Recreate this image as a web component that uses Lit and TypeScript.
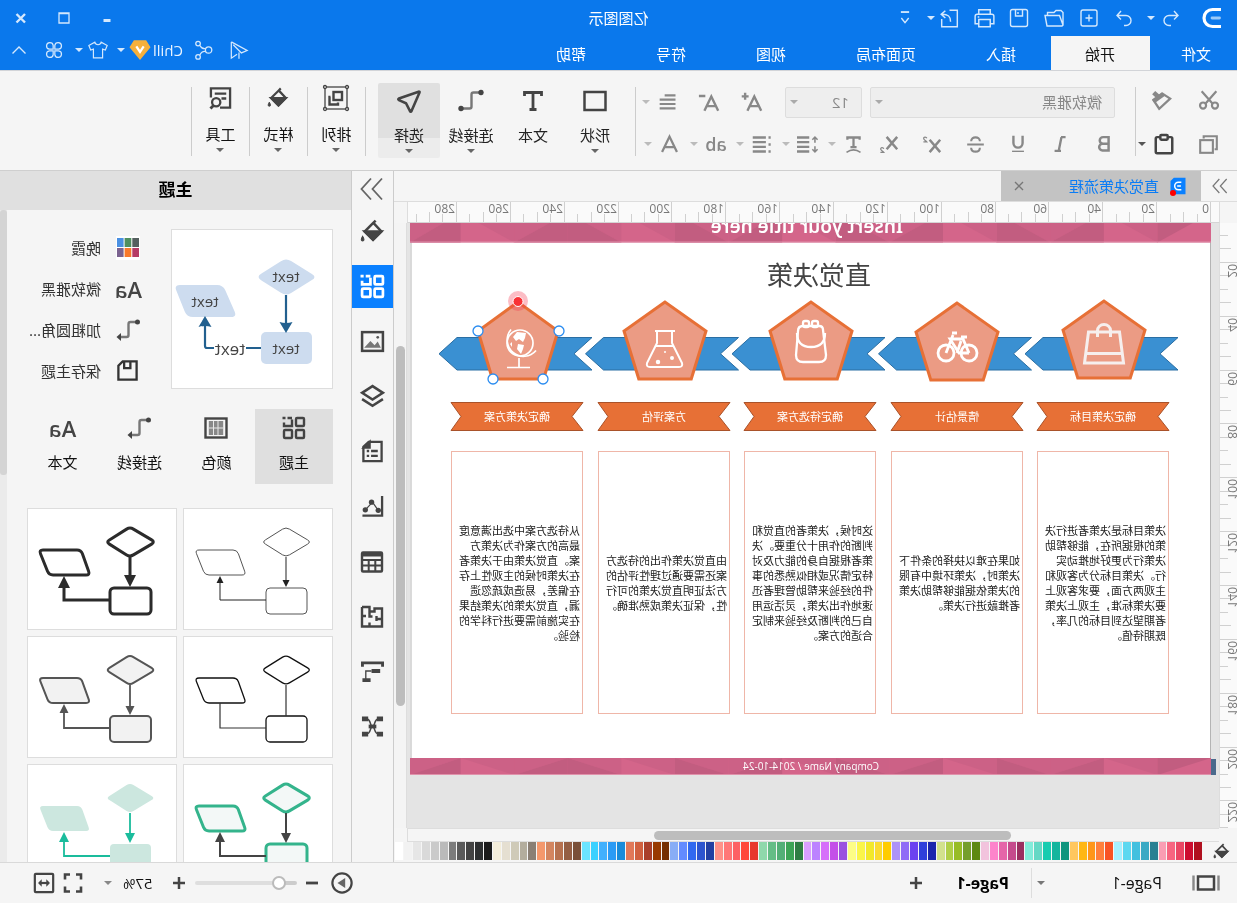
import { LitElement, html, svg, css } from "lit";
import { customElement, property } from "lit/decorators.js";

type Pt = [number, number];

/** Closed polygon path with softly rounded corners. */
function roundPoly(pts: Pt[], r: number): string {
  let d = "";
  pts.forEach((p, i) => {
    const a = pts[(i + pts.length - 1) % pts.length];
    const b = pts[(i + 1) % pts.length];
    const la = Math.hypot(a[0] - p[0], a[1] - p[1]);
    const lb = Math.hypot(b[0] - p[0], b[1] - p[1]);
    const s = [p[0] + ((a[0] - p[0]) * r) / la, p[1] + ((a[1] - p[1]) * r) / la];
    const e = [p[0] + ((b[0] - p[0]) * r) / lb, p[1] + ((b[1] - p[1]) * r) / lb];
    d += `${i ? "L" : "M"}${s[0].toFixed(1)} ${s[1].toFixed(1)}Q${p[0]} ${p[1]} ${e[0].toFixed(1)} ${e[1].toFixed(1)}`;
  });
  return d + "Z";
}

/* All glyphs live on a 24 x 24 grid. */
const ICONS: Record<string, unknown> = {
  logo: svg`<path d="M3 3.500h8.500a8.500 8.500 0 0 1 0 17H3" fill="none" stroke="#fff" stroke-width="3.200"/><path d="M4.500 12h7.500" stroke="#9ccaf8" stroke-width="2.800" stroke-linecap="round"/>`,
  undo: svg`<path d="M9 5L5 9.500l4 4M5.500 9.500H14a5 5 0 0 1 0 10h-2"/>`,
  redo: svg`<path d="M15 5l4 4.500-4 4M18.500 9.500H10a5 5 0 0 0 0 10h2"/>`,
  add: svg`<rect x="4" y="4" width="16" height="16" rx="2"/><path d="M12 8.500v7M8.500 12h7"/>`,
  open: svg`<path d="M3 19V6.500l2-2h5l2 2h6.500v3M3 19l3.500-9.500H21L19 20H4z"/>`,
  save: svg`<rect x="3.500" y="3.500" width="17" height="17" rx="2"/><path d="M8.500 4v6h7V4M13 6v2"/>`,
  print: svg`<path d="M6.500 8V3.500h11V8M6.500 17H3V10q0-2 2-2h14q2 0 2 2v7h-3.500M6.500 13h11v7h-11zM17 10.500h1.500"/>`,
  exportDoc: svg`<path d="M12 4H4.500v16h15v-7.500M11 15c0-5 2-7 8-7M16 4.500L20 8l-4 3.500"/>`,
  more: svg`<path d="M7.500 5.500h9" stroke-width="2"/><path d="M8 12l4 5 4-5"/>`,
  min: svg`<path d="M8.500 14.500h7" stroke-width="3"/>`,
  max: svg`<path d="M7 7h10v10H7zM7 7.500h10"/>`,
  close: svg`<path d="M8 8l8.500 8.500M16.500 8L8 16.500" stroke-width="2.400"/>`,
  send: svg`<path d="M19.500 3L3 12l6 2.500L17.500 6M19.500 3v17l-6-4M11.500 14v6.500"/>`,
  share: svg`<circle cx="7" cy="12" r="3.500"/><circle cx="18.500" cy="5" r="2.500"/><circle cx="18.500" cy="19.500" r="2.500"/><path d="M10.500 10.500q4 .5 6-3.500M10.500 13.500q4-.5 6 4"/>`,
  shirt: svg`<path d="M8.500 3.500a3.600 3.600 0 0 0 7 0l6.500 3.500-2 5-3-1v9.500H7V11l-3 1-2-5z"/>`,
  clover: svg`<path d="M11 11H6.500A4 4 0 1 1 11 6.500zM13 11V6.500a4 4 0 1 1 4.500 4.500zM11 13v4.500A4 4 0 1 1 6.500 13zM13 13h4.500a4 4 0 1 1-4.500 4.500z"/>`,
  up: svg`<path d="M5.500 15.500L12 9l6.500 6.500"/>`,
  badge: svg`<path d="M6 2.500h12l4 6.500L12 21 2 9z" fill="#f5b03c" stroke="#f5b03c"/><path d="M8 8l4 6 4-6" stroke="#fff" stroke-width="2.500"/>`,

  cut: svg`<path d="M4 2.500L16 16M20 2.500L8 16"/><circle cx="5.500" cy="18" r="3.300"/><circle cx="18.500" cy="18" r="3.300"/>`,
  copy: svg`<path d="M17.500 5V2.500h-15v15H5"/><rect x="7" y="7" width="14.500" height="14.500"/>`,
  brush: svg`<path d="M2 10.500L14 21.500 20 12.500 10.500 5z"/><path d="M9.500 5.500l11 8M15 8.500l5-4.500" stroke-width="5"/>`,
  paste: svg`<rect x="3" y="4.500" width="18" height="17.500" rx="1.500" stroke="#444"/><rect x="8" y="2.300" width="8" height="5" rx="1" stroke="#444" fill="#f5f5f5"/>`,
  bold: svg`<path d="M7 4.500h6a3.500 3.500 0 0 1 0 7.300H7zM7 11.800h6.700a3.600 3.600 0 0 1 0 7.200H7z"/>`,
  italic: svg`<path d="M7 4.500h5M11.500 4.500l3 15M12 19.500h7"/>`,
  underline: svg`<path d="M7 3v8a5 5 0 0 0 10 0V3"/><path d="M5.500 20h13" stroke-width="1.500"/>`,
  strike: svg`<path d="M17.500 8c0-3.500-2.500-5-5.500-5S6.500 4.500 6.500 8M6.500 16c0 3.500 2.500 5 5.500 5s5.500-1.500 5.500-5M1.500 12h21" />`,
  sup: svg`<path d="M4 7l11 13M15 7L4 20"/><path d="M18 5.500c.5-1.800 3.500-1.500 3.200.3-.2 1.300-2 2-3.200 3.500h3.500" stroke-width="1.300"/>`,
  sub: svg`<path d="M4 4l11 13M15 4L4 17"/><path d="M18 16.500c.5-1.800 3.500-1.500 3.200.3-.2 1.300-2 2-3.200 3.500h3.500" stroke-width="1.300"/>`,
  textBox: svg`<path d="M5 6.500V4h14v2.500M12 4v11M8.500 15h7"/><path d="M4 21q8-5.500 16 0" stroke-width="1.900"/>`,
  lineHeight: svg`<path d="M10 4h14M10 9.300h14M10 14.600h14M10 20h14"/><path d="M3.500 3.500v6.500M.5 6.500l3-3 3 3M3.500 14v6.500M.5 17.500l3 3 3-3" stroke-width="1.800"/>`,
  bullets: svg`<path d="M7 4h15M7 9.300h15M7 14.600h15M7 20h15M1.500 4h2.500M1.500 12h2.500M1.500 20h2.500"/>`,
  align: svg`<path d="M3 4h13M3 9.200h19M3 14.400h19M3 19.600h19"/>`,
  fontA: svg`<path d="M3.500 20.500L12 3l8.500 17.500M7 15h10"/>`,
  bigger: svg`<path d="M2 21.500L9.500 6 17 21.500M5 16.500h9"/><path d="M19.500 2v7.500M15.700 5.800h7.500"/>`,
  smaller: svg`<path d="M2 21.500L9.500 6 17 21.500M5 16.500h9M16 5.500h7"/>`,

  shape: svg`<rect x="1.500" y="3" width="21" height="18" stroke-width="2.500"/>`,
  text: svg`<path d="M3.500 7V3.500h17V7M12 3.500v17M8.500 20.500h7" stroke-width="2.800"/>`,
  connector: svg`<path d="M4 3.500h5.500q2 0 2 2v12q0 2 2 2H21" stroke="#777"/><circle cx="2" cy="3.500" r="2.700" fill="#444" stroke="none"/><circle cx="22" cy="19.500" r="2.700" fill="#444" stroke="none"/>`,
  connArrow: svg`<path d="M4 4h5.500q2 0 2 2v11q0 2 2 2H19" stroke="#777"/><circle cx="2.500" cy="4" r="2.500" fill="#444" stroke="none"/><path d="M19 15v8l4.500-4z" fill="#444" stroke="none"/>`,
  select: svg`<path d="M1.500 3.500Q1 2.500 2.500 2.700L22 9.500q1.500.8 0 1.700l-7 3-4 8q-.8 1.200-1.600-.4z" stroke-width="2.600"/>`,
  arrange: svg`<rect x="1" y="1" width="22" height="22" stroke-width="1.300"/><rect x="6" y="6" width="8.500" height="8"/><path d="M17.500 11h1v7.500h-8.500v-2" /><g fill="#f5f5f5" stroke-width="1.300"><circle cx="1" cy="1" r="1.500"/><circle cx="23" cy="1" r="1.500"/><circle cx="1" cy="23" r="1.500"/><circle cx="23" cy="23" r="1.500"/></g>`,
  bucket: svg`<path d="M10.500 4.500L3.500 12l8 8 8-8-8-8L9 1.500"/><path d="M3.500 12h16l-8 8z" fill="currentColor"/><path d="M21.500 16.500c1.600 2.500 1.800 4.500 0 4.500s-1.600-2 0-4.500z" fill="currentColor" stroke-width="1"/>`,
  tools: svg`<path d="M12.500 21.500H2v-20h20V11M6 7h12M6 12h5" /><circle cx="16.500" cy="16" r="4.300"/><path d="M19 19l3.500 3.500" stroke-width="3"/>`,

  chevrons: svg`<path d="M2 1.500L11.500 12 2 22.500M13 1.500L22.500 12 13 22.500" stroke-width="1.800"/>`,
  grid: svg`<rect x="2" y="2" width="8" height="8" rx="1"/><path d="M14 3.500V10h8V6.500M14 2h4.500M20.500 2h3" /><rect x="2" y="14" width="8" height="8" rx="1"/><rect x="14" y="14" width="8" height="8" rx="1"/>`,
  picture: svg`<rect x="2" y="3" width="20" height="18"/><path d="M20 18l-6-6.500-4 4-3-3.500L4 18z" fill="#777" stroke="none"/><circle cx="7" cy="8" r="1.300" fill="#555" stroke="none"/>`,
  layers: svg`<path d="M12 2l10 6.500L12 15 2 8.500zM2 14.500l10 6.500 10-6.500"/>`,
  page: svg`<path d="M2.500 2h13.500l5.500 5v15h-19zM6.500 11.500h7M15.500 11.500h2.500M6.500 16.500h7M15.500 16.500h2.500" /><path d="M15 2v6h6z" fill="currentColor"/>`,
  chart: svg`<path d="M2 1v20.500h20.500"/><path d="M6 16l6-8.500 7 7.500" stroke-width="1.300"/><g fill="currentColor" stroke="none"><circle cx="6" cy="16" r="2.800"/><circle cx="13" cy="7.500" r="2.800"/><circle cx="19.500" cy="15.500" r="2.800"/></g>`,
  table: svg`<rect x="2" y="2.500" width="20" height="19" rx="1"/><path d="M2 4.500h20" stroke-width="4"/><path d="M2 10h20M2 15.500h20M8.700 9v12M15.300 9v12" stroke-width="2"/>`,
  plan: svg`<path d="M2 2h7.500v8M9.500 6.500h5V3.500H22v18H9.500v-4M2 2v19.500h8M2 11h4M9.500 6.500v5h3M22 14h-6M16.500 11v5" transform="matrix(-1 0 0 1 24 0)"/>`,
  gantt: svg`<path d="M1.500 7V3h21v4" stroke-width="3"/><path d="M4 11.500h9M14 21h8.500" stroke-width="4"/><path d="M13 11.500h6V20" stroke-width="1.400"/>`,
  mind: svg`<path d="M5 4c6 0 4 8 7 8s1-8 7-8M5 20c6 0 4-8 7-8s1 8 7 8" stroke-width="1.600"/><path d="M1 4h6.500M16.500 4H23M1 20h6.500M16.500 20H23" stroke-width="5"/><path d="M8 12h8" stroke-width="4"/>`,
  palette: svg`<rect x="1.500" y="2.500" width="21" height="19"/><path d="M6 6.200h12v11.600H6z" stroke="#888" fill="#888"/><path d="M10 5v14M14.500 5v14M5 12h14" stroke="#e8e8e8" stroke-width="1"/>`,
  saveTheme: svg`<path d="M2.500 2.500H17l4.500 4.500v14.500h-19zM9 3v6.500h6.500V3"/>`,
  swatches: svg`<rect x="0" y="0" width="24" height="24" fill="#fff" stroke="none"/><g stroke="none"><path d="M1 2h6.700v9H1z" fill="#55605f"/><path d="M8.700 2h6.700v9H8.700z" fill="#4f8f5f"/><path d="M16.400 2H23v9h-6.600z" fill="#4a90e2"/><path d="M1 12h6.700v9H1z" fill="#b63c66"/><path d="M8.700 12h6.700v9H8.700z" fill="#f97a2c"/><path d="M16.400 12H23v9h-6.600z" fill="#7b6390"/></g>`,
  doc: svg`<path d="M3 2h14l4 4v16H3z" fill="#0a80ff" stroke="none"/><path d="M8 7.500h3.500a4.500 4.500 0 0 1 0 9H8M8.500 12h4.500" stroke="#fff" stroke-width="1.800"/>`,
  cross: svg`<path d="M6 6l12 12M18 6L6 18" stroke-width="2"/>`,

  pages: svg`<rect x="4" y="5.500" width="16" height="13" stroke-width="2.500"/><path d="M-.5 4.500v15M24.500 4.500v15" stroke="#888"/>`,
  plus: svg`<path d="M12 6v12M6 12h12" stroke-width="2.500"/>`,
  minus: svg`<path d="M6 12h12" stroke-width="2.800"/>`,
  play: svg`<circle cx="12" cy="12" r="10.500"/><path d="M8.500 6.500v11l8.500-5.500z" fill="#666" stroke="none"/>`,
  full: svg`<path d="M4 8.500V3.500h5M15 3.500h5v5M4 15.500v5h5M15 20.500h5v-5" stroke-width="2.600"/>`,
  fit: svg`<rect x="2" y="2" width="20" height="20" rx="1"/><path d="M6.500 12h11"/><path d="M9.500 8v8l-4-4zM14.500 8v8l4-4z" fill="currentColor" stroke="none"/>`,
};

@customElement("ed-icon")
export class EdIcon extends LitElement {
  @property() name = "";
  @property({ type: Number }) size = 24;
  @property({ type: Number }) weight = 2.4;
  static styles = css`
    :host { display: inline-flex; flex: none; }
    svg { display: block; overflow: visible; }
  `;
  render() {
    return html`<svg width=${this.size} height=${this.size} viewBox="0 0 24 24" fill="none"
      stroke="currentColor" stroke-width=${this.weight} aria-hidden="true">${ICONS[this.name]}</svg>`;
  }
}

interface Look {
  fill: string; stroke: string; width: number; line: string; lineWidth: number; head: number;
}

/** Miniature flow chart shown on a theme card. */
@customElement("theme-thumb")
export class ThemeThumb extends LitElement {
  @property({ attribute: false }) look!: Look;
  static styles = css`
    :host { display: block; }
    svg { display: block; }
  `;
  render() {
    const k = this.look;
    const h = k.head;
    const diamond = roundPoly([[22, 34], [47, 19], [71, 34], [47, 49]], 4);
    const para = roundPoly([[96, 42], [138, 42], [128, 67], [87, 67]], 4);
    return html`<svg width="148" height="120" viewBox="1 1 148 120" aria-hidden="true">
      <g fill=${k.fill} stroke=${k.stroke} stroke-width=${k.width}>
        <path d=${diamond}></path><path d=${para}></path>
        <rect x="26" y="80" width="41" height="26" rx="4"></rect>
      </g>
      <path d="M47 49v${h ? 24 : 31}M67 92h46V${h ? 74 : 67}" fill="none" stroke=${k.line} stroke-width=${k.lineWidth}></path>
      ${h ? svg`<path d="M${47 - h} ${79 - h * 2}h${h * 2}L47 79zM${113 - h} ${68 + h * 2}h${h * 2}L113 68z" fill=${k.line}/>` : ""}
    </svg>`;
  }
}

const TABS = ["文件", "开始", "插入", "页面布局", "视图", "符号", "帮助"];
const SWATCHES = (
  "b0101f cc0d2f ea4764 f76580 fa9db3 2a8093 3aa9c4 42c0df 5cd8f0 a6f0ff f85324 ff7f3b ff9619 ffb714 ffc75e " +
  "0f957e 14b59d 18ccb0 65d8c5 83ecda 9a2f60 c54b8c e566a9 fd84cb f2c3dd 5d8911 759e2c 98bc26 b0cf48 d2e18d " +
  "1c26ad 3040db 6b41f0 8f6bf6 ad93f8 ffcc00 fbdb30 f2e82a faf54a fdfd85 9b51e0 c44fe8 d66ffa bc83ff d99fff " +
  "2f7d43 3da456 53af77 64bd86 8fd8ab e8382d ff483a fd6164 ff7777 ff9189 2340a2 2d55cf 3169f0 638bff 88adf6 " +
  "752f00 983a00 a93f2a d0603f e17858 198bd9 2b9bf5 41b0fd 3bd1ff 6be4ff 794f38 945e43 b6714f d3855f f4986c " +
  "8a7f74 b3ad9d cfcab8 e5dfd1 f4eedb 1b1b1b 2d2f30 434343 5a5a5a 7c7c7c bababa cacaca d9d9d9 e6e6e6 f2f2f2 ffffff"
).split(" ");

const STEPS = [
  { x: 42, label: "确定决策目标", body: "决策目标是决策者进行决策的根据所在，能够帮助决策行为更好地推动实行。决策目标分为客观和主观两方面，要求客观上要决策标准，主观上决策者期望达到目标的几率，既期待值。" },
  { x: 188, label: "情景估计", body: "如果在难以抉择的条件下决策时，决策环境中有限的决策依据能够帮助决策者推敲进行决策。" },
  { x: 335, label: "确定待选方案", body: "这时候，决策者的直觉和判断的作用十分重要。决策者根据自身的能力及对特定情况或相似熟悉的事件的经验来帮助管理者迅速地作出决策，灵活运用自己的判断及经验来制定合适的方案。" },
  { x: 481, label: "方案评估", body: "由直觉决策作出的待选方案还需要通过理性评估的方法证明直觉决策的可行性，保证决策成熟准确。" },
  { x: 628, label: "确定决策方案", body: "从待选方案中选出满意度最高的方案作为决策方案。直觉决策由于决策者在决策时候的主观性上存在偏差，易造成疏忽遗漏，直觉决策的决策结果在实施前需要进行科学的检验。" },
];

const LOOKS: Look[] = [
  { fill: "#fff", stroke: "#555", width: 1, line: "#222", lineWidth: 1, head: 3.5 },
  { fill: "#fff", stroke: "#2b2b2b", width: 3, line: "#2b2b2b", lineWidth: 3, head: 6 },
  { fill: "#fff", stroke: "#111", width: 1.3, line: "#333", lineWidth: 1.2, head: 0 },
  { fill: "#f2f2f2", stroke: "#555", width: 2, line: "#555", lineWidth: 1.8, head: 4.5 },
  { fill: "#f3f8f7", stroke: "#34b48c", width: 3, line: "#444", lineWidth: 2, head: 5 },
  { fill: "#cce7df", stroke: "none", width: 0, line: "#1abc9c", lineWidth: 1.8, head: 5 },
];

const UNIT = 53.86;

@customElement("app-root")
export class AppRoot extends LitElement {
  static styles = css`
    :host { display: block; height: 100vh; overflow: hidden; background: #f5f5f5; }
    * { box-sizing: border-box; }
    .app {
      height: 100%; display: flex; flex-direction: column; transform: scaleX(-1);
      font: 15px/20px "Open Sans", "Noto Sans CJK SC", sans-serif; color: #222;
    }
    button, select {
      font: inherit; color: inherit; background: none; border: 0; padding: 0; margin: 0;
      appearance: none; display: inline-flex; align-items: center; justify-content: center;
    }
    .caret { flex: none; width: 0; height: 0; border: 4px solid transparent; border-top: 4px solid currentColor; border-bottom: 0; }

    header { flex: none; height: 70px; background: #0a78ec; color: #d4e8fd; }
    .title-row { height: 36px; display: grid; grid-template-columns: 1fr auto 1fr; align-items: center; }
    .quick { display: flex; align-items: center; }
    .quick button { width: 35px; }
    .quick .logo { width: 51px; padding-right: 1px; }
    .quick .undo { width: 30px; }
    .quick .drop { width: 10px; margin-right: 4px; }
    .quick .drop2 { width: 10px; margin: 0 3px 0 -4px; }
    .app-name { color: #fff; }
    .window { display: flex; justify-content: flex-end; }
    .window button { width: 43px; height: 32px; }
    .tab-row { height: 34px; display: flex; align-items: stretch; justify-content: space-between; }
    .tabs { display: flex; margin-left: -9px; }
    .tabs button { padding: 2px 35px 0; color: #fff; }
    .tabs .on { background: #f5f5f5; color: #111; padding: 2px 34px 0 35px; }
    .tabs .first { padding: 2px 31px 0 35px; }
    .account { display: flex; align-items: center; padding: 0 2px 6px 0; }
    .account button { width: 35px; }
    .account .user { width: auto; gap: 2px; color: #e8f3ff; margin-left: 3px; }
    .account .drop { width: 16px; }
    .account .shirt { width: 22px; margin-left: 4px; }
    .account .clover { width: 34px; }

    .ribbon { flex: none; height: 101px; display: flex; border-top: 1px solid #d2d4d8; border-bottom: 1px solid #cfcfcf; color: #888; }
    .sep { width: 1px; margin: 16px 0 14px; background: #ccc; flex: none; }
    .clip { width: 101px; display: grid; grid-template: 44px 44px / 50px 45px; padding: 7px 0 0 3px; }
    .clip div { display: flex; align-items: center; justify-content: center; }
    .clip .caret { color: #555; margin-left: 7px; }
    .clip .pair { padding-left: 10px; }
    .font { width: 499px; padding-top: 9px; }
    .font .row { display: flex; align-items: center; height: 44px; margin-bottom: -2px; }
    .font .row1 { padding-left: 20px; }
    .font .row2 { padding-left: 9px; }
    .combo { display: flex; align-items: center; height: 31px; border: 1px solid #ddd; border-radius: 2px; background: #eee; padding: 0 4px 0 12px; margin-right: 8px; }
    .combo select { flex: 1; min-width: 0; height: 100%; }
    .combo .caret { color: #aaa; }
    .family { width: 245px; }
    .size { width: 77px; margin-right: 11px; }
    .tool { width: 43px; }
    .duo { width: 46px; display: flex; align-items: center; color: #bbb; }
    .duo button { width: 28px; color: #888; }
    .duo .caret { margin-left: 4px; }
    .tail { margin-left: 6px; }
    .ab { font: 600 18px/24px "Open Sans", sans-serif; }
    .big { display: flex; padding: 0 12px 0 9px; }
    .big button, .single button { flex-direction: column; justify-content: flex-start; width: 62px; height: 75px; margin-top: 12px; color: #444; padding-top: 6px; }
    .single button { width: 57px; padding-top: 3px; }
    .single ed-icon { height: 24px; align-items: center; }
    .big span, .single span { margin: 12px 0 4px; white-space: nowrap; color: #222; }
    .single span { margin-top: 14px; color: #111; }
    .big .caret, .single .caret { color: #666; }
    .big .on { background: linear-gradient(#e0e0e0 55px, #ececec 55px); border-radius: 2px; }

    .middle { flex: 1; min-height: 0; display: grid; grid-template-columns: minmax(0, 1fr) 43px 351px; }
    .work { display: grid; grid-template-rows: 31px 21px minmax(0, 1fr) 14px 20px; min-height: 0; }
    .docs { display: flex; align-items: stretch; border-bottom: 1px solid #ddd; }
    .docs > button { width: 36px; color: #777; padding-right: 2px; }
    .doc { width: 200px; background: #c3c3c3; display: flex; align-items: center; padding: 0 10px 0 13px; color: #0a7cf5; }
    .doc a { flex: 1; color: inherit; text-decoration: none; margin-left: 9px; }
    .doc button { color: #777; }
    .logo-doc { position: relative; display: flex; }
    .dot { position: absolute; width: 6px; height: 6px; border-radius: 50%; background: #f00; left: 12px; top: 14px; }
    .hruler { display: grid; grid-template-columns: 17px minmax(0, 1fr) 13px; }
    .hruler svg, .vruler svg { display: block; width: 100%; height: 100%; background: #fafafa; }
    .hruler svg { border-left: 1px solid #ddd; border-bottom: 1px solid #d5d5d5; border-right: 1px solid #ddd; }
    .vruler { border-right: 1px solid #ddd; min-height: 0; overflow: hidden; }
    .mark { font: 12px "Open Sans", sans-serif; fill: #777; }
    .view { display: grid; grid-template-columns: 18px minmax(0, 1fr) 13px; min-height: 0; }
    .canvas { position: relative; overflow: hidden; background: #e4e4e4; }
    .vscroll { display: grid; grid-template-rows: 123fr 360fr 122fr; padding: 0 2px 0 1px; background: #f4f4f4; border-left: 1px solid #ddd; }
    .vscroll i, .hscroll i { grid-row: 2; background: #bdbdbd; border-radius: 5px; }
    .hscroll { display: grid; grid-template-columns: 208fr 358fr 246fr; margin: 0 13px 0 18px; padding: 2px 0 1px; border: 1px solid #ddd; border-left: 0; }
    .hscroll i { grid-row: 1; grid-column: 2; }
    .colors { display: flex; padding-bottom: 2px; }
    .colors .pick { width: 35px; padding-right: 5px; color: #444; }
    .colors .chip { flex: 1; border-right: 1px solid #f5f5f5; height: 18px; }

    .slide { position: absolute; left: 8px; top: 0; width: 801px; height: 552px; background: #fff; }
    .slide svg { position: absolute; left: 0; top: 0; overflow: visible; display: block; }
    .slide-head { font: 600 19px "Noto Sans", sans-serif; fill: #fff; }
    .slide-title { font: 26px "Noto Sans CJK SC", sans-serif; fill: #444; }
    .slide-foot { font: 10px "Open Sans", sans-serif; fill: #fff; }
    .ribbon-label { font: 11px "Noto Sans CJK SC", sans-serif; fill: #fff; }
    .box {
      position: absolute; top: 228px; width: 132px; height: 263px; border: 1px solid #efb6a8; padding: 1px 2px 0;
      display: flex; align-items: center; font: 11px/15px "Noto Sans CJK SC", sans-serif; color: #222;
    }
    .box p { margin: 0; }

    .rail { border: solid #ccc; border-width: 0 1px; display: flex; flex-direction: column; align-items: stretch; color: #444; }
    .rail button { height: 43px; margin-bottom: 12px; }
    .rail .fold { height: 32px; margin: 2px 0 5px; color: #666; }
    .rail .on { background: #0a80ff; color: #fff; }

    .panel { display: flex; flex-direction: column; min-height: 0; overflow: hidden; }
    h2 { margin: 0; flex: none; height: 39px; background: #e0e0e0; font-size: 17px; line-height: 38px; text-align: center; color: #000; }
    .panel-body { flex: 1; min-height: 0; display: grid; grid-template-columns: 1fr 7px; }
    .track { background: #ebebeb; display: grid; grid-template-rows: 265fr 387fr; }
    .track i { background: #d4d4d4; border-radius: 3px; }
    .panel-main { padding: 19px 16px 0 18px; min-height: 0; overflow: hidden; }
    .current { display: flex; align-items: center; height: 160px; }
    .preview { width: 162px; height: 160px; background: #fff; border: 1px solid #ddd; flex: none; }
    .preview svg { display: block; }
    .preview text { font: 15px "Open Sans", sans-serif; fill: #444; text-anchor: middle; }
    .preview .wire-label { font-size: 17px; }
    .props { flex: 1; list-style: none; margin: 0; padding: 0 0 0 29px; color: #333; white-space: nowrap; }
    .props li { height: 41px; display: flex; align-items: center; }
    .props ed-icon, .props .aa { width: 28px; justify-content: center; margin-right: 13px; }
    .aa { font: 600 22px/24px "Open Sans", sans-serif; color: #444; }
    .kinds { display: flex; margin-top: 20px; }
    .kinds button { width: 77px; height: 75px; flex-direction: column; justify-content: flex-start; padding-top: 7px; color: #444; }
    .kinds span { margin-top: 12px; color: #111; }
    .kinds .aa { margin: 0; color: #444; }
    .kinds .on { background: #dfdfdf; width: 78px; }
    .themes { display: grid; grid-template-columns: 150px 150px; gap: 6px; margin-top: 24px; }
    .themes button { border: 1px solid #ddd; background: #fff; height: 122px; }

    footer { flex: none; height: 41px; border-top: 1px solid #d9d9d9; display: flex; align-items: center; color: #444; }
    .pages { width: 62px; display: flex; justify-content: center; }
    .page-pick { display: flex; align-items: center; width: 144px; padding: 0 5px 0 13px; color: #111; height: 30px; border-right: 1px solid #ddd; font-size: 16px; }
    .page-pick select { flex: 1; }
    .page-pick .caret { color: #777; }
    .page-tab { font-weight: 700; font-size: 16px; color: #000; margin-left: 22px; }
    .new-page { margin-left: 28px; }
    .zoom { margin-left: auto; display: flex; align-items: center; padding-right: 33px; }
    .zoom .less { margin: 0 3px 0 7px; }
    .zoom .plus { margin: 0 14px 0 4px; }
    .zoom .value { gap: 11px; color: #111; margin-right: 19px; }
    .zoom .value .caret { color: #888; }
    .zoom .full { margin-right: 6px; }
    input[type="range"] { appearance: none; width: 102px; height: 16px; margin: 0; background: none; }
    input[type="range"]::-webkit-slider-runnable-track { height: 4px; border-radius: 2px; background: linear-gradient(90deg, #ccc 17px, #dedede 17px); }
    input[type="range"]::-webkit-slider-thumb { appearance: none; width: 14px; height: 14px; margin-top: -5px; border-radius: 50%; background: #fff; border: 2px solid #bbb; }
  `;

  private btn(name: string, label: string, size = 22, cls = "", weight = 2.4) {
    return html`<button class=${cls} aria-label=${label}><ed-icon .name=${name} .size=${size} .weight=${weight}></ed-icon></button>`;
  }

  private duo(name: string, label: string) {
    return html`<div class="duo">${this.btn(name, label, 21, "", 2.6)}<span class="caret"></span></div>`;
  }

  private large(name: string, label: string, cls = "", caret = true, size = 24) {
    return html`<button class=${cls}><ed-icon .name=${name} .size=${size}></ed-icon><span>${label}</span>${caret ? html`<i class="caret"></i>` : ""}</button>`;
  }

  /** Faceted pink strip; each letter picks the triangles of one facet. */
  private band(y: number, h: number, clipTop = 0) {
    const kinds = "amcdmmcmamcmdmc";
    const t = y;
    const b = y + h;
    return svg`<g>
      <rect x="0" y=${clipTop} width="801" height=${b - clipTop} fill="#d4658a"/>
      ${[..."amcdmcdbdmcdmam".length ? kinds : ""].map((_, i) => {
        const k = "amcdmcdmcdmdcmc"[i];
        const l = i * 53.6;
        const r = Math.min(801, l + 53.6);
        const dark = "#c25d80";
        const mid = "#cc6186";
        if (k === "a") return svg`<path d="M${l} ${t}H${r}V${b}z" fill=${dark}/>`;
        if (k === "m") return svg`<path d="M${l} ${t}H${r}L${l} ${b}z" fill=${mid}/>`;
        if (k === "c") return svg`<path d="M${l} ${t}H${r}V${b}z" fill=${mid}/><path d="M${l} ${t}V${b}H${r}z" fill=${dark}/>`;
        return svg`<path d="M${l} ${t}H${r}L${l} ${b}z" fill=${mid}/><path d="M${r} ${t}V${b}H${l}z" fill=${dark}/>`;
      })}
      <path d="M0 ${b - 0.5}H801" stroke="#e092ab"/>
    </g>`;
  }

  private slide() {
    const pent = (cx: number, top: number, w = 41) =>
      svg`<path d="M${cx} ${top}L${cx + w} ${top + 29}L${cx + w * 0.64} ${top + 77}H${cx - w * 0.64}L${cx - w} ${top + 29}z" fill="#eb9b84" stroke="#e77036" stroke-width="3"/>`;
    return html`<div class="slide">
      <svg width="801" height="552" viewBox="0 0 801 552">
        <path d="M.5 19V536M800 19V536" stroke="#b4b4b4"></path>
        ${this.band(-10, 29.5, 0)}
        ${this.band(535, 17, 535)}
        <rect x="-5" y="536" width="5" height="16" fill="#4b6a8c"></rect>
        <text class="slide-head" x="308" y="10">Insert your title here</text>
        <text class="slide-title" x="340" y="62">直觉决策</text>
        <text class="slide-foot" x="332" y="547">Company Name / 2014-10-24</text>
        ${[0, 1, 2, 3, 4].map((i) => {
          const x = 33 + i * 146.5;
          return svg`<path d="M${x} 114.500H${x + 135}l18 16.300-18 16.200H${x}l18-16.200z" fill="#3a90d2" stroke="#2a6ea3"/>`;
        })}
        ${pent(107, 78)}${pent(254, 80)}${pent(400, 79)}${pent(546, 79)}${pent(693, 79, 40)}
        ${STEPS.map(
          (s) => svg`<path d="M${s.x} 179.500h132l-10 14 10 14H${s.x}l11-14z" fill="#e77036" stroke="#a9522a"/>
            <text class="ribbon-label" x=${s.x + 66} y="198" text-anchor="middle">${s.label}</text>`
        )}
        <g fill="none" stroke="#fff" stroke-width="3">
          <g stroke="#f6efee"><path d="M91.500 109h31l4 31h-39zM90 130.500h36M100.500 114v-6.500a6.500 6 0 0 1 13 0v6.500"/></g>
          <g stroke-width="2.800"><circle cx="242" cy="130" r="8"/><circle cx="265" cy="130" r="8"/>
            <path d="M242 130l6-14h13l-9 14h-10M250 118l4 12M259 110h-5M265 130l-7-18M244 114h6" /></g>
          <g stroke-width="2.300"><path d="M388 107q0-4 4-4h16q5 0 5 5l2 24q0 7-7 7h-16q-7 0-7-7z"/><path d="M386 110q0 14 14 14t14-14"/><rect x="393" y="98" width="6" height="6" rx="2"/><rect x="402" y="98" width="6" height="6" rx="2"/></g>
          <g stroke-width="2"><path d="M536 108h20M539 109v11l-10 20q-1 4 3 4h29q4 0 3-4l-10-20v-11M538 123h17"/><circle cx="553" cy="139" r="1.500" fill="#fff" stroke-width="1.500"/><circle cx="539" cy="135" r="1"/><circle cx="546" cy="129" r=".7" stroke-width="1"/></g>
          <g stroke-width="1.700"><circle cx="691" cy="120" r="13"/><path d="M700 106.500a16 16 0 1 1-25 21M692 135v9M681 144.500h23"/>
            <path d="M685 110l9-1 4 5-3 4-3-2-4 3-2-4zM687 122l6-1 1 5-4 5-2-5zM699 119l2 2-2 3z" fill="#fff" stroke="none"/></g>
        </g>
        <circle cx="693" cy="78" r="10" fill="#f5334a" fill-opacity=".32"></circle>
        <circle cx="693" cy="78.500" r="5" fill="#f93236" stroke="#fff"></circle>
        <g fill="#fff" stroke="#2a8cf0" stroke-width="1.300">
          <circle cx="652" cy="108" r="5"></circle><circle cx="733" cy="108" r="5"></circle>
          <circle cx="668" cy="156" r="5"></circle><circle cx="718" cy="156" r="5"></circle>
        </g>
      </svg>
      ${STEPS.map((s) => html`<div class="box" style="left:${s.x}px"><p>${s.body}</p></div>`)}
    </div>`;
  }

  private hruler() {
    const ticks = Array.from({ length: 60 }, (_, i) => i);
    return html`<svg>
      <path stroke="#d0d0d0" d=${ticks.map((i) => `M${Math.round(8 + (i * UNIT) / 4) + 0.5} ${i % 4 === 0 ? 0 : i % 4 === 2 ? 10 : 12}V20`).join("")}></path>
      ${ticks.filter((i) => i % 4 === 0).map((i) => svg`<text class="mark" x=${Math.round(8 + (i * UNIT) / 4) + 2} y="11">${i * 5}</text>`)}
    </svg>`;
  }

  private vruler() {
    const ticks = Array.from({ length: 56 }, (_, i) => i);
    const y = (i: number) => Math.round(-15 + (i * UNIT) / 4);
    return html`<svg>
      <path stroke="#d0d0d0" d=${ticks.map((i) => `M${i % 4 === 0 ? 0 : i % 4 === 2 ? 9 : 6} ${y(i) + 0.5}H17`).join("")}></path>
      ${ticks.filter((i) => i && i % 4 === 0).map((i) => svg`<text class="mark" text-anchor="end" transform="translate(9 ${y(i) + 2}) rotate(-90)">${i * 5}</text>`)}
    </svg>`;
  }

  private preview() {
    return html`<svg width="160" height="158" viewBox="1 1 160 158">
      <g fill="#cddcef">
        <path d=${roundPoly([[16, 48], [47, 29], [77, 48], [47, 67]], 6)}></path>
        <path d=${roundPoly([[110, 56], [159, 56], [146, 88], [96, 88]], 6)}></path>
        <rect x="21" y="103" width="51" height="32" rx="5"></rect>
      </g>
      <path d="M47 66v30M72 119h54q2 0 2-2V96" fill="none" stroke="#22608f" stroke-width="2.200"></path>
      <path d="M40.500 93q6.500 2 13 0L47 104zM121.500 98q6.500-2 13 0L128 87z" fill="#22608f"></path>
      <rect x="87" y="110" width="32" height="20" fill="#fff"></rect>
      <text x="47" y="53">text</text><text x="128" y="78">text</text><text x="47" y="125">text</text>
      <text class="wire-label" x="103" y="126">text</text>
    </svg>`;
  }

  render() {
    return html`<div class="app">
      <header>
        <div class="title-row">
          <div class="quick">
            ${this.btn("logo", "菜单", 24, "logo")}
            ${this.btn("undo", "撤销", 24, "undo", 1.4)}<button class="drop" aria-label="撤销列表"><i class="caret"></i></button>
            ${this.btn("redo", "恢复", 24, "", 1.4)}${this.btn("add", "新建", 24, "", 1.4)}${this.btn("open", "打开", 24, "", 1.4)}
            ${this.btn("save", "保存", 24, "", 1.4)}${this.btn("print", "打印", 25, "", 1.4)}${this.btn("exportDoc", "导出", 25, "", 1.4)}
            <button class="drop2" aria-label="导出列表"><i class="caret"></i></button>${this.btn("more", "更多", 22, "", 1.5)}
          </div>
          <div class="app-name">亿图图示</div>
          <div class="window">${this.btn("min", "最小化", 24)}${this.btn("max", "最大化", 24, "", 1.3)}${this.btn("close", "关闭", 24)}</div>
        </div>
        <div class="tab-row">
          <nav class="tabs">${TABS.map((t, i) => html`<button class=${i === 1 ? "on" : i === 0 ? "first" : ""}>${t}</button>`)}</nav>
          <div class="account">
            ${this.btn("send", "发送", 23, "", 1.3)}${this.btn("share", "分享", 22, "", 1.4)}
            <button class="user">Chill<ed-icon name="badge" .size=${22}></ed-icon></button>
            <button class="drop" aria-label="账户"><i class="caret"></i></button>
            ${this.btn("shirt", "皮肤", 22, "shirt", 1.3)}<button class="drop" aria-label="皮肤列表"><i class="caret"></i></button>
            ${this.btn("clover", "应用", 20, "clover", 1.5)}${this.btn("up", "收起", 24, "", 1.4)}
          </div>
        </div>
      </header>

      <section class="ribbon">
        <div class="clip">
          <div>${this.btn("cut", "剪切", 22)}</div><div>${this.btn("brush", "格式刷", 22)}</div>
          <div>${this.btn("copy", "复制", 21)}</div><div class="pair">${this.btn("paste", "粘贴", 22, "", 2.7)}<i class="caret"></i></div>
        </div>
        <i class="sep"></i>
        <div class="font">
          <div class="row row1">
            <div class="combo family"><select aria-label="字体"><option>微软雅黑</option></select><i class="caret"></i></div>
            <div class="combo size"><select aria-label="字号"><option>12</option></select><i class="caret"></i></div>
            ${this.btn("bigger", "增大字号", 22, "tool", 2.6)}${this.btn("smaller", "减小字号", 22, "tool", 2.6)}
            <div class="duo tail">${this.btn("align", "对齐", 20, "", 2.6)}<i class="caret"></i></div>
          </div>
          <div class="row row2">
            ${this.btn("bold", "加粗", 22, "tool", 2.7)}${this.btn("italic", "斜体", 22, "tool", 2.6)}${this.btn("underline", "下划线", 22, "tool", 2.6)}
            ${this.btn("strike", "删除线", 19, "tool", 2.6)}${this.btn("sup", "上标", 23, "tool", 2.6)}${this.btn("sub", "下标", 23, "tool", 2.6)}
            ${this.duo("textBox", "文字方向")}${this.duo("lineHeight", "行距")}${this.duo("bullets", "项目符号")}
            <div class="duo"><button class="ab">ab</button><i class="caret"></i></div>${this.duo("fontA", "字体颜色")}
          </div>
        </div>
        <i class="sep"></i>
        <div class="big">
          ${this.large("shape", "形状")}${this.large("text", "文本", "", false)}${this.large("connector", "连接线")}${this.large("select", "选择", "on")}
        </div>
        <i class="sep"></i><div class="single">${this.large("arrange", "排列")}</div>
        <i class="sep"></i><div class="single">${this.large("bucket", "样式", "", true, 22)}</div>
        <i class="sep"></i><div class="single">${this.large("tools", "工具", "", true, 23)}</div>
        <i class="sep"></i>
      </section>

      <main class="middle">
        <div class="work">
          <div class="docs">
            ${this.btn("chevrons", "展开", 16)}
            <div class="doc"><span class="logo-doc"><ed-icon name="doc" .size=${20}></ed-icon><i class="dot"></i></span><a href="#doc">直觉决策流程</a>${this.btn("cross", "关闭文档", 16)}</div>
          </div>
          <div class="hruler"><span></span>${this.hruler()}<span></span></div>
          <div class="view">
            <div class="vruler">${this.vruler()}</div>
            <div class="canvas">${this.slide()}</div>
            <div class="vscroll"><i></i></div>
          </div>
          <div class="hscroll"><i></i></div>
          <div class="colors">
            ${this.btn("bucket", "填充颜色", 17, "pick")}
            ${SWATCHES.map((c) => html`<button class="chip" aria-label="#${c}" style="background-color:#${c}"></button>`)}
          </div>
        </div>

        <nav class="rail">
          ${this.btn("chevrons", "收起面板", 24, "fold", 1.5)}
          ${this.btn("bucket", "填充", 25)}${this.btn("grid", "主题", 25, "on", 2.6)}${this.btn("picture", "图片", 25)}
          ${this.btn("layers", "图层", 25)}${this.btn("page", "页面", 23)}${this.btn("chart", "图表", 23)}
          ${this.btn("table", "表格", 24)}${this.btn("plan", "平面图", 24)}${this.btn("gantt", "甘特图", 23)}${this.btn("mind", "思维导图", 23)}
        </nav>

        <aside class="panel">
          <h2>主题</h2>
          <div class="panel-body">
            <div class="panel-main">
              <div class="current">
                <div class="preview">${this.preview()}</div>
                <ul class="props">
                  <li><ed-icon name="swatches" .size=${24}></ed-icon>晚霞</li>
                  <li><span class="aa">Aa</span>微软雅黑</li>
                  <li><ed-icon name="connArrow" .size=${24}></ed-icon>加粗圆角...</li>
                  <li><ed-icon name="saveTheme" .size=${23}></ed-icon>保存主题</li>
                </ul>
              </div>
              <div class="kinds">
                <button class="on"><ed-icon name="grid" .size=${24}></ed-icon><span>主题</span></button>
                <button><ed-icon name="palette" .size=${24}></ed-icon><span>颜色</span></button>
                <button><ed-icon name="connArrow" .size=${24}></ed-icon><span>连接线</span></button>
                <button><b class="aa">Aa</b><span>文本</span></button>
              </div>
              <div class="themes">${LOOKS.map((l, i) => html`<button aria-label="主题 ${i + 1}"><theme-thumb .look=${l}></theme-thumb></button>`)}</div>
            </div>
            <div class="track"><i></i></div>
          </div>
        </aside>
      </main>

      <footer>
        <div class="pages">${this.btn("pages", "页面列表", 24)}</div>
        <div class="page-pick"><select aria-label="页面"><option>Page-1</option></select><i class="caret"></i></div>
        <button class="page-tab">Page-1</button>
        ${this.btn("plus", "新建页面", 24, "new-page")}
        <div class="zoom">
          ${this.btn("play", "演示", 22)}${this.btn("minus", "缩小", 24, "less")}
          <input type="range" min="0" max="100" value="12" aria-label="缩放" />
          ${this.btn("plus", "放大", 24, "plus")}
          <button class="value">57%<i class="caret"></i></button>
          ${this.btn("full", "全屏", 24, "full")}${this.btn("fit", "适应宽度", 22)}
        </div>
      </footer>
    </div>`;
  }
}
